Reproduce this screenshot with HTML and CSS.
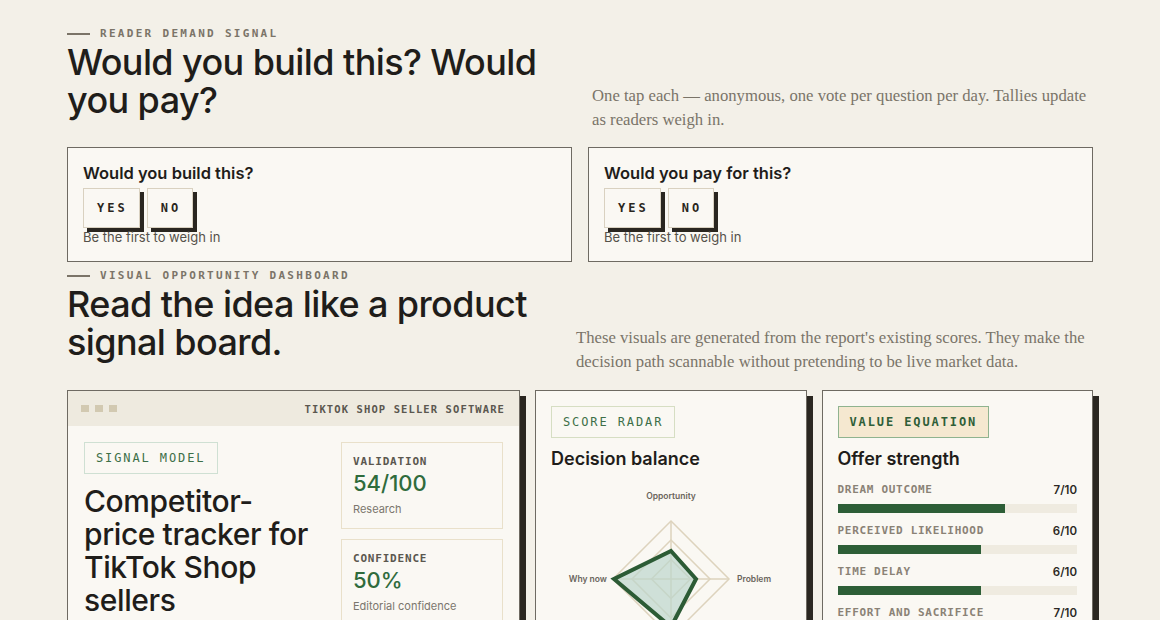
FILE: index.html
```html
<!DOCTYPE html>
<html lang="en">
<head>
    <meta charset="UTF-8">
    <meta name="viewport" content="width=device-width, initial-scale=1.0">
    <title>Competitor-price tracker for TikTok Shop sellers</title>
    <link rel="stylesheet" href="styles.css">
</head>

<body>
<div class="page">

    <!-- reader votes -->
    <section class="section">
        <div class="section-head">
            <div>
                <p class="eyebrow">Reader demand signal</p>
                <h2>Would you build this? Would you pay?</h2>
            </div>
            <p class="lede">One tap each — anonymous, one vote per question per day. Tallies update as readers weigh in.</p>
        </div>

        <div class="vote-grid">
            <div class="vote-card">
                <h3>Would you build this?</h3>
                <div class="vote-buttons">
                    <button class="vote-btn">Yes</button>
                    <button class="vote-btn">No</button>
                </div>
                <p class="vote-note">Be the first to weigh in</p>
            </div>
            <div class="vote-card">
                <h3>Would you pay for this?</h3>
                <div class="vote-buttons">
                    <button class="vote-btn">Yes</button>
                    <button class="vote-btn">No</button>
                </div>
                <p class="vote-note">Be the first to weigh in</p>
            </div>
        </div>
    </section>

    <!-- dashboard -->
    <section class="section">
        <div class="section-head section-head--wide">
            <div>
                <p class="eyebrow">Visual opportunity dashboard</p>
                <h2>Read the idea like a product signal board.</h2>
            </div>
            <p class="lede">These visuals are generated from the report's existing scores. They make the decision path scannable without pretending to be live market data.</p>
        </div>

        <div class="dash-grid">
            <div class="dash-card">
                <div class="window-bar">
                    <div class="dots"><span></span><span></span><span></span></div>
                    <span class="window-title">TikTok Shop seller software</span>
                </div>
                <div class="signal-body">
                    <div>
                        <span class="tag">Signal model</span>
                        <h3 class="idea-title">Competitor-<br>price tracker for TikTok Shop sellers</h3>
                    </div>
                    <div class="stats">
                        <div class="stat">
                            <p class="stat-label">Validation</p>
                            <p class="stat-value">54/100</p>
                            <p class="stat-sub">Research</p>
                        </div>
                        <div class="stat">
                            <p class="stat-label">Confidence</p>
                            <p class="stat-value">50%</p>
                            <p class="stat-sub">Editorial confidence</p>
                        </div>
                    </div>
                </div>
            </div>

            <div class="dash-card dash-card--pad">
                <span class="tag tag--olive">Score radar</span>
                <h3 class="card-title">Decision balance</h3>
                <svg class="radar" width="239" height="170" viewBox="0 0 239 170">
                    <g fill="none" stroke="#ddd3bd" stroke-width="1.5">
                        <polygon points="120,45 178,103 120,161 62,103"/>
                        <polygon points="120,64 159,103 120,142 81,103"/>
                        <polygon points="120,83.5 139.5,103 120,122.5 100.5,103"/>
                        <line x1="120" y1="45" x2="120" y2="161"/>
                        <line x1="62" y1="103" x2="178" y2="103"/>
                    </g>
                    <polygon points="120,75 145,103 120,151 63,103" fill="#bcd5cc" fill-opacity="0.7" stroke="#2c5b35" stroke-width="4"/>
                    <g class="radar-label">
                        <text x="120" y="23" text-anchor="middle">Opportunity</text>
                        <text x="186" y="106">Problem</text>
                        <text x="56" y="106" text-anchor="end">Why now</text>
                    </g>
                </svg>
            </div>

            <div class="dash-card dash-card--pad">
                <span class="tag tag--cream">Value equation</span>
                <h3 class="card-title">Offer strength</h3>
                <div class="meters">
                    <div class="meter">
                        <div class="meter-head"><span>Dream outcome</span><b>7/10</b></div>
                        <div class="meter-track"><div class="meter-fill" style="width: 70%"></div></div>
                    </div>
                    <div class="meter">
                        <div class="meter-head"><span>Perceived likelihood</span><b>6/10</b></div>
                        <div class="meter-track"><div class="meter-fill" style="width: 60%"></div></div>
                    </div>
                    <div class="meter">
                        <div class="meter-head"><span>Time delay</span><b>6/10</b></div>
                        <div class="meter-track"><div class="meter-fill" style="width: 60%"></div></div>
                    </div>
                    <div class="meter">
                        <div class="meter-head"><span>Effort and sacrifice</span><b>7/10</b></div>
                        <div class="meter-track"><div class="meter-fill" style="width: 70%"></div></div>
                    </div>
                </div>
            </div>
        </div>
    </section>

</div>
</body>
</html>
```

FILE: styles.css
```css
* {
    margin: 0;
    padding: 0;
    box-sizing: border-box;
}

body {
    font-family: Inter, "Noto Sans", sans-serif;
    background-color: #f3f0e8;
    color: #1f1d1a;
    padding: 26px 0 40px;
}

.page {
    max-width: 1026px;
    margin: 0 auto;
}

/* section headers */
.section-head {
    display: grid;
    grid-template-columns: 1fr 1fr;
    column-gap: 24px;
    align-items: end;
    margin-bottom: 15px;
}

.section-head--wide {
    grid-template-columns: 485px 1fr;
    margin-bottom: 16px;
}

.eyebrow {
    display: flex;
    align-items: center;
    gap: 10px;
    font-family: "DejaVu Sans Mono", "Liberation Mono", monospace;
    font-size: 11px;
    font-weight: 700;
    line-height: 16px;
    letter-spacing: 2.3px;
    text-transform: uppercase;
    color: #7b7468;
    margin-bottom: 1px;
}

.eyebrow::before {
    content: "";
    width: 23px;
    height: 2px;
    background-color: #7b7468;
}

h2 {
    font-size: 36px;
    font-weight: 500;
    line-height: 38px;
    letter-spacing: -0.6px;
    padding-bottom: 13px;
}

.lede {
    font-family: "Liberation Serif", "DejaVu Serif", serif;
    font-size: 16.7px;
    line-height: 24px;
    color: #7a7468;
}

/* vote cards */
.vote-grid {
    display: grid;
    grid-template-columns: 1fr 1fr;
    gap: 16px;
    margin-bottom: 6px;
}

.vote-card {
    background-color: #faf8f3;
    border: 1px solid #6e6a62;
    padding: 14px 15px 16px;
    height: 115px;
}

.vote-card h3 {
    font-size: 16.5px;
    font-weight: 600;
    line-height: 22px;
    margin-bottom: 4px;
}

.vote-buttons {
    display: flex;
    gap: 7px;
}

.vote-btn {
    height: 40px;
    padding: 0 11px 0 13px;
    background-color: #faf8f3;
    border: 1px solid #d9d1c0;
    box-shadow: 4px 4px 0 #2a2620;
    font-family: "DejaVu Sans Mono", "Liberation Mono", monospace;
    font-size: 12px;
    font-weight: 700;
    letter-spacing: 3px;
    text-transform: uppercase;
    color: #2a2620;
    cursor: pointer;
}

.vote-note {
    font-size: 13px;
    line-height: 16px;
    color: #55514a;
    margin-top: 1px;
}

/* dashboard */
.dash-grid {
    display: grid;
    grid-template-columns: 453px 1fr 1fr;
    gap: 15px;
    align-items: start;
}

.dash-card {
    background-color: #faf8f3;
    border: 1px solid #6e6a62;
    box-shadow: 6px 6px 0 #2a2620;
    min-height: 300px;
}

.dash-card--pad {
    padding: 15px 15px 20px;
}

.window-bar {
    display: flex;
    justify-content: space-between;
    align-items: center;
    height: 35px;
    padding: 0 14px 0 13px;
    background-color: #eeeadf;
}

.dots {
    display: flex;
    gap: 6px;
}

.dots span {
    width: 8px;
    height: 7px;
    background-color: #d2c9b1;
}

.window-title {
    font-family: "DejaVu Sans Mono", "Liberation Mono", monospace;
    font-size: 10.5px;
    font-weight: 700;
    letter-spacing: 1.1px;
    text-transform: uppercase;
    color: #5b574f;
}

.signal-body {
    display: grid;
    grid-template-columns: 1fr 162px;
    gap: 16px;
    padding: 16px;
}

.tag {
    display: inline-block;
    height: 32px;
    line-height: 30px;
    padding: 0 11px;
    border: 1px solid #cfe0d3;
    font-family: "DejaVu Sans Mono", "Liberation Mono", monospace;
    font-size: 12px;
    letter-spacing: 1.9px;
    text-transform: uppercase;
    color: #3d6f48;
}

.tag--olive {
    border-color: #d6dec3;
}

.tag--cream {
    background-color: #f5e8d0;
    border-color: #8fb38f;
    font-weight: 700;
    color: #2f5e38;
}

.idea-title {
    font-size: 30px;
    font-weight: 500;
    line-height: 33px;
    letter-spacing: -0.4px;
    margin-top: 11px;
}

.stats {
    display: flex;
    flex-direction: column;
    gap: 10px;
}

.stat {
    border: 1px solid #e9e0ca;
    padding: 12px 11px;
}

.stat-label {
    font-family: "DejaVu Sans Mono", "Liberation Mono", monospace;
    font-size: 11px;
    font-weight: 700;
    line-height: 14px;
    letter-spacing: 0.8px;
    text-transform: uppercase;
    color: #5b574f;
}

.stat-value {
    font-size: 22px;
    font-weight: 500;
    line-height: 26px;
    color: #2f6b3c;
    margin-top: 1px;
}

.stat-sub {
    font-size: 11px;
    line-height: 14px;
    color: #7b766d;
    margin-top: 6px;
}

.card-title {
    font-size: 18px;
    font-weight: 600;
    line-height: 22px;
    margin-top: 10px;
}

.radar {
    display: block;
    margin-top: 6px;
}

.radar-label {
    font-family: Inter, sans-serif;
    font-size: 8.5px;
    font-weight: 600;
    fill: #6a655c;
}

/* value equation meters */
.meters {
    margin-top: 13px;
}

.meter {
    margin-bottom: 11px;
}

.meter-head {
    display: flex;
    justify-content: space-between;
    align-items: center;
    line-height: 14px;
    margin-bottom: 7px;
}

.meter-head span {
    font-family: "DejaVu Sans Mono", "Liberation Mono", monospace;
    font-size: 11px;
    font-weight: 700;
    letter-spacing: 0.7px;
    text-transform: uppercase;
    color: #8a8276;
}

.meter-head b {
    font-size: 11.5px;
    font-weight: 600;
    color: #2b2824;
}

.meter-track {
    height: 9px;
    background-color: #efebe0;
}

.meter-fill {
    height: 100%;
    background-color: #2d5e37;
}
```
